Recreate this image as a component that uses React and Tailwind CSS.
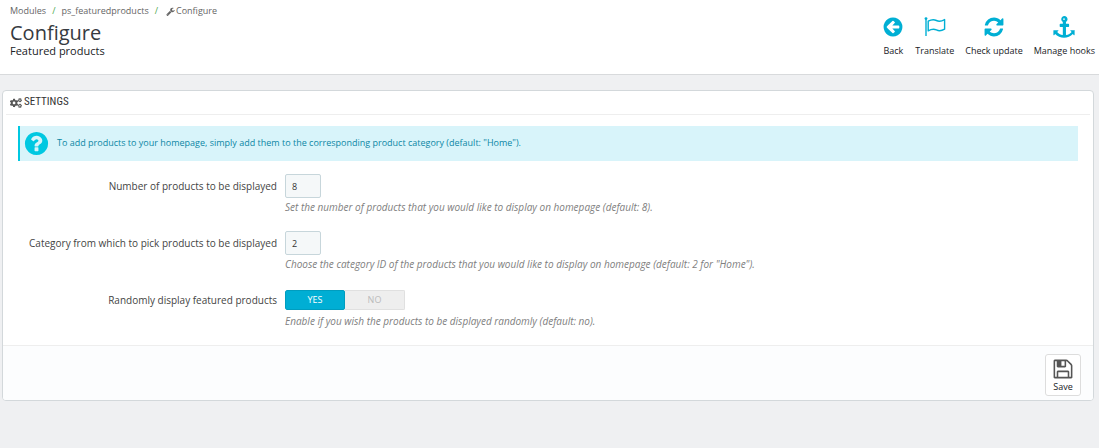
import { useState } from "react";
import { FaCogs } from "react-icons/fa";

const PATHS = {
  back: "M1408 960v-128q0-26-19-45t-45-19h-502l189-189q19-19 19-45t-19-45l-91-91q-18-18-45-18t-45 18l-362 362-91 91q-18 18-18 45t18 45l91 91 362 362q18 18 45 18t45-18l91-91q18-18 18-45t-18-45l-189-189h502q26 0 45-19t19-45zm256-64q0 209-103 385.5t-279.5 279.5-385.5 103-385.5-103-279.5-279.5-103-385.5 103-385.5 279.5-279.5 385.5-103 385.5 103 279.5 279.5 103 385.5z",
  refresh:
    "M1639 1056q0 5-1 7-64 268-268 434.5t-478 166.5q-146 0-282.5-55t-243.5-157l-129 129q-19 19-45 19t-45-19-19-45v-448q0-26 19-45t45-19h448q26 0 45 19t19 45-19 45l-137 137q71 66 161 102t187 36q134 0 250-65t186-179q11-17 53-117 8-23 30-23h192q13 0 22.5 9.5t9.5 22.5zm25-800v448q0 26-19 45t-45 19h-448q-26 0-45-19t-19-45 19-45l138-138q-148-137-349-137-134 0-250 65t-186 179q-11 17-53 117-8 23-30 23h-199q-13 0-22.5-9.5t-9.5-22.5v-7q65-268 270-434.5t480-166.5q146 0 284 55.5t245 156.5l130-129q19-19 45-19t45 19 19 45z",
  anchor:
    "M960 256q0-26-19-45t-45-19-45 19-19 45 19 45 45 19 45-19 19-45zm800 928v352q0 22-20 30-8 2-12 2-13 0-23-9l-93-93q-119 143-318.5 226.5t-397.5 83.5-397.5-83.5-318.5-226.5l-93 93q-9 9-23 9-4 0-12-2-20-8-20-30v-352q0-14 9-23t23-9h352q22 0 30 20 8 19-7 35l-100 100q67 91 189.5 153.5t271.5 82.5v-647h-192q-26 0-45-19t-19-45v-128q0-26 19-45t45-19h192v-163q-58-34-93-92.5t-35-128.5q0-106 75-181t181-75 181 75 75 181q0 70-35 128.5t-93 92.5v163h192q26 0 45 19t19 45v128q0 26-19 45t-45 19h-192v647q149-20 271.5-82.5t189.5-153.5l-100-100q-15-16-7-35 8-20 30-20h352q14 0 23 9t9 23z",
  save: "M512 1536h768v-384h-768v384zm896 0h128v-896q0-14-10-38.5t-20-34.5l-281-281q-10-10-34-20t-39-10v416q0 40-28 68t-68 28h-576q-40 0-68-28t-28-68v-416h-128v1280h128v-416q0-40 28-68t68-28h832q40 0 68 28t28 68v416zm-384-928v-320q0-13-9.5-22.5t-22.5-9.5h-192q-13 0-22.5 9.5t-9.5 22.5v320q0 13 9.5 22.5t22.5 9.5h192q13 0 22.5-9.5t9.5-22.5zm640 32v928q0 40-28 68t-68 28h-1344q-40 0-68-28t-28-68v-1344q0-40 28-68t68-28h928q40 0 88 20t76 48l280 280q28 28 48 76t20 88z",
  help: "M1024 1376v-192q0-14-9-23t-23-9h-192q-14 0-23 9t-9 23v192q0 14 9 23t23 9h192q14 0 23-9t9-23zm256-672q0-88-55.5-163t-138.5-116-170-41q-243 0-371 213-15 24 8 42l132 100q7 6 19 6 16 0 25-12 53-68 86-92 34-24 86-24 48 0 85.5 26t37.5 59q0 38-20 61t-68 45q-63 28-115.5 86.5t-52.5 125.5v36q0 14 9 23t23 9h192q14 0 23-9t9-23q0-19 21.5-49.5t54.5-49.5q32-18 49-28.5t46-35 44.5-48 28-60.5 12.5-81zm384 192q0 209-103 385.5t-279.5 279.5-385.5 103-385.5-103-279.5-279.5-103-385.5 103-385.5 279.5-279.5 385.5-103 385.5 103 279.5 279.5 103 385.5z",
  wrench:
    "M448 1472q0-26-19-45t-45-19-45 19-19 45 19 45 45 19 45-19 19-45zm644-420l-682 682q-37 37-90 37-52 0-91-37l-106-108q-38-36-38-90 0-53 38-91l681-681q39 98 114.5 173.5t173.5 114.5zm634-435q0 39-23 106-47 134-164.5 217.5t-258.5 83.5q-185 0-316.5-131.5t-131.5-316.5 131.5-316.5 316.5-131.5q58 0 121.5 16.5t107.5 46.5q16 11 16 28t-16 28l-293 169v224l193 107q5-3 79-48.5t135.5-81 70.5-35.5q15 0 23.5 10t8.5 25z",
};

function Icon({ name, className }) {
  return (
    <svg viewBox="0 0 1792 1792" fill="currentColor" aria-hidden="true" className={className}>
      <path d={PATHS[name]} />
    </svg>
  );
}

function FlagIcon({ className }) {
  return (
    <svg viewBox="0 0 22 22" fill="none" stroke="currentColor" aria-hidden="true" className={className}>
      <path d="M2 3V20" strokeWidth="1.4" />
      <circle cx="2" cy="2.6" r="1.4" fill="currentColor" stroke="none" />
      <path
        d="M4.2 5.2C7.5 3.4 9.8 3.2 12.4 4.5C15 5.8 17.4 5.4 20.6 3.6V13.2C17.4 15 15 15.2 12.4 13.9C9.8 12.8 7.5 13 4.2 14.8Z"
        strokeWidth="1.4"
        strokeLinejoin="round"
      />
    </svg>
  );
}

function ToolbarLink({ label, children }) {
  return (
    <a href="#" className="flex flex-col items-center gap-1 text-[#00afd4]">
      <span className="flex h-6 items-center">{children}</span>
      <span className="text-[9px] leading-4 text-[#202226]">{label}</span>
    </a>
  );
}

function Row({ label, htmlFor, hint, children }) {
  return (
    <div className="grid grid-cols-[1fr_3fr] gap-x-2">
      <label htmlFor={htmlFor} className="pt-1 text-right text-[10px] leading-4 text-[#444]">
        {label}
      </label>
      <div className="flex flex-col items-start">
        <div className="flex h-6 items-center">{children}</div>
        <p className="pt-px text-[10px] italic leading-4 text-[#808080]">{hint}</p>
      </div>
    </div>
  );
}

const inputClass =
  "h-6 w-9 rounded-[2px] border border-[#c7d6db] bg-[#f5f8f9] px-1.5 text-[9px] text-[#333] outline-none";

export default function App() {
  const [count, setCount] = useState("8");
  const [category, setCategory] = useState("2");
  const [random, setRandom] = useState(true);

  return (
    <div className="min-h-screen bg-[#eff0f2] font-['Open_Sans',sans-serif]">
      <header className="flex items-start justify-between border-b border-[#d8dadc] bg-white pb-[15px] pl-[10px] pr-1">
        <div>
          <nav aria-label="Breadcrumb" className="flex items-center gap-1.5 pt-[3px] text-[9px] leading-4 text-[#666]">
            <a href="#">Modules</a>
            <span className="text-[#4da84d]">/</span>
            <a href="#">ps_featuredproducts</a>
            <span className="text-[#4da84d]">/</span>
            <a href="#" className="flex items-center gap-px pl-0.5">
              <Icon name="wrench" className="size-[9px]" />
              Configure
            </a>
          </nav>
          <h1 className="pt-0.5 text-xl leading-6 text-[#363a41]">Configure</h1>
          <p className="text-[11px] leading-3 text-[#202226]">Featured products</p>
        </div>
        <div className="flex gap-[11px] pt-[15px]">
          <ToolbarLink label="Back">
            <Icon name="back" className="size-[22px]" />
          </ToolbarLink>
          <ToolbarLink label="Translate">
            <FlagIcon className="size-[22px]" />
          </ToolbarLink>
          <ToolbarLink label="Check update">
            <Icon name="refresh" className="size-[22px]" />
          </ToolbarLink>
          <ToolbarLink label="Manage hooks">
            <Icon name="anchor" className="size-[22px]" />
          </ToolbarLink>
        </div>
      </header>

      <main className="pb-6 pl-0.5 pr-[5px] pt-[15px]">
        <section className="overflow-hidden rounded border border-[#d3d8db] bg-white">
          <h2 className="mx-[3px] flex h-6 items-center gap-0.5 border-b border-[#eee] pl-1 font-['Liberation_Sans_Narrow','Roboto_Condensed','Open_Sans_Condensed',sans-serif] text-[11px] text-[#333]">
            <FaCogs className="size-3 text-[#555]" />
            SETTINGS
          </h2>

          <div className="mx-[15px] mt-[11px] flex items-center gap-[7px] border-l-2 border-[#00c8e1] bg-[#d8f4fa] py-1 pl-[3px] text-[9px] leading-4 text-[#0c87a5]">
            <Icon name="help" className="size-[27px] text-[#00c8e1]" />
            <p className="pb-px">
              To add products to your homepage, simply add them to the corresponding product category (default: "Home").
            </p>
          </div>

          <form onSubmit={(e) => e.preventDefault()}>
            <div className="flex flex-col gap-4 px-[7px] pb-4 pt-[13px]">
              <Row
                label="Number of products to be displayed"
                htmlFor="count"
                hint="Set the number of products that you would like to display on homepage (default: 8)."
              >
                <input id="count" className={inputClass} value={count} onChange={(e) => setCount(e.target.value)} />
              </Row>
              <Row
                label="Category from which to pick products to be displayed"
                htmlFor="category"
                hint={'Choose the category ID of the products that you would like to display on homepage (default: 2 for "Home").'}
              >
                <input id="category" className={inputClass} value={category} onChange={(e) => setCategory(e.target.value)} />
              </Row>
              <Row
                label="Randomly display featured products"
                htmlFor="random"
                hint="Enable if you wish the products to be displayed randomly (default: no)."
              >
                <button
                  id="random"
                  type="button"
                  role="switch"
                  aria-checked={random}
                  onClick={() => setRandom(!random)}
                  className="grid h-5 w-[120px] grid-cols-2 overflow-hidden rounded-[2px] bg-[#eee] text-[9px] leading-[18px]"
                >
                  <span
                    className={
                      random
                        ? "rounded-[2px] border border-[#009dbf] bg-[#00aed4] text-white"
                        : "border border-[#e0e0e0] text-[#bbb]"
                    }
                  >
                    YES
                  </span>
                  <span
                    className={
                      random
                        ? "border border-l-0 border-[#e0e0e0] text-[#bbb]"
                        : "rounded-[2px] border border-[#009dbf] bg-[#00aed4] text-white"
                    }
                  >
                    NO
                  </span>
                </button>
              </Row>
            </div>
            <div className="flex justify-end border-t border-[#eee] bg-[#fcfdfe] pb-1 pr-3 pt-2">
              <button
                type="submit"
                className="flex w-9 flex-col items-center rounded-[3px] border border-[#ddd] bg-white pb-px pt-[3px] text-[9px] leading-[14px] text-[#202226]"
              >
                <Icon name="save" className="size-[22px] text-[#555]" />
                Save
              </button>
            </div>
          </form>
        </section>
      </main>
    </div>
  );
}
